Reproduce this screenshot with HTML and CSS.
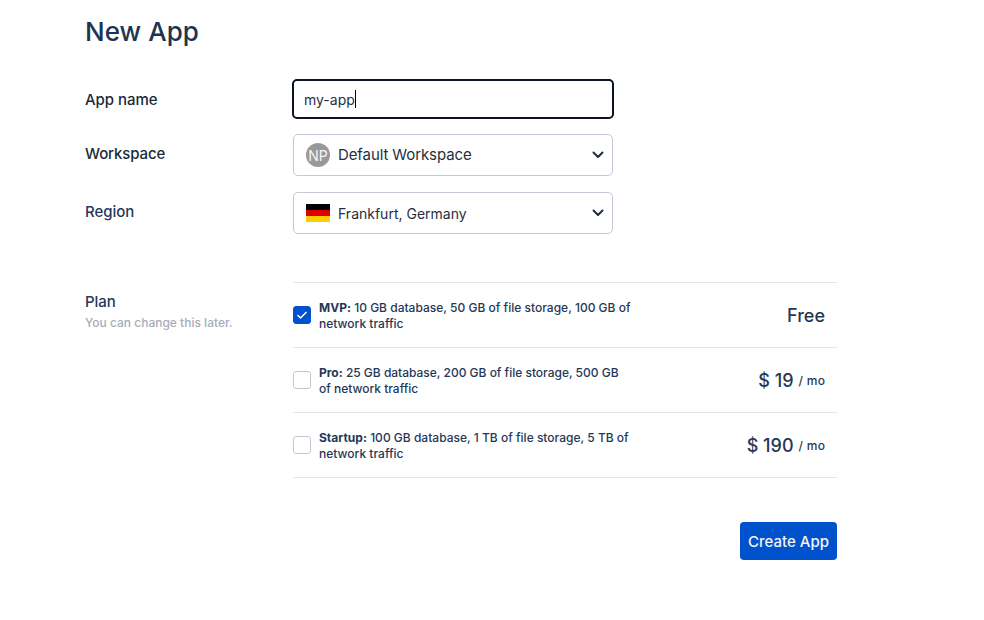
FILE: index.html
```html
<!DOCTYPE html>
<html lang="en">
<head>
<meta charset="utf-8">
<title>New App</title>
<link rel="stylesheet" href="styles.css">
</head>
<body>
<main class="page">
  <h1>New App</h1>
  <div class="row row-name"><label>App name</label><div class="input"><span class="value">my-app</span><i class="caret"></i></div></div>
  <div class="row row-workspace"><label>Workspace</label><div class="select"><span class="avatar">NP</span><span class="value">Default Workspace</span><svg class="chevron" width="12" height="8" viewBox="0 0 12 8"><path d="M1.500 1.500 6 6l4.500-4.500"/></svg></div></div>
  <div class="row row-region"><label>Region</label><div class="select"><span class="flag"></span><span class="value region">Frankfurt, Germany</span><svg class="chevron" width="12" height="8" viewBox="0 0 12 8"><path d="M1.500 1.500 6 6l4.500-4.500"/></svg></div></div>
  <div class="row row-plan">
    <div class="plan-label"><label>Plan</label><small>You can change this later.</small></div>
    <div class="plans">
      <div class="plan"><span class="check checked"><svg width="12" height="10" viewBox="0 0 12 10"><path d="m1.500 5 3 3 6-6"/></svg></span><p><b>MVP:</b> 10 GB database, 50 GB of file storage, 100 GB of<br>network traffic</p><div class="price">Free</div></div>
      <div class="plan"><span class="check"></span><p class="pro"><b>Pro:</b> 25 GB database, 200 GB of file storage, 500 GB<br>of network traffic</p><div class="price">$ 19<span>/ mo</span></div></div>
      <div class="plan"><span class="check"></span><p><b>Startup:</b> 100 GB database, 1 TB of file storage, 5 TB of<br>network traffic</p><div class="price">$ 190<span>/ mo</span></div></div>
    </div>
  </div>
  <div class="actions"><button>Create App</button></div>
</main>
</body>
</html>
```
FILE: styles.css
```css
* { box-sizing: border-box; }
body { margin: 0; background: #fff; color: #253858; font-family: Inter, "Liberation Sans", sans-serif; }
.page { width: 752px; margin-left: 85px; padding-top: 16px; }
h1 { margin: 0; font-size: 26px; line-height: 32px; font-weight: 450; color: #20344f; letter-spacing: 0.05px; }
.row { display: grid; grid-template-columns: 208px 1fr; }
label { display: block; font-size: 15px; line-height: 20px; font-weight: 500; letter-spacing: -0.05px; }
.row-name { margin-top: 31px; }
.row-name label { margin-top: 11px; color: #1b2a38; }
.row-workspace { margin-top: 15px; }
.row-workspace label { margin-top: 10px; color: #1b2a38; letter-spacing: -0.12px; }
.row-region { margin-top: 16px; }
.row-region label { margin-top: 10px; }
.input { display: flex; align-items: center; width: 322px; height: 40px; margin-left: -1px; padding-left: 10px; border: 2px solid #0b1425; border-radius: 5px; }
.input .value { font-size: 14px; padding-top: 2px; }
.caret { width: 1px; height: 18px; background: #000; }
.select { display: flex; align-items: center; gap: 8px; width: 320px; height: 42px; padding: 0 8px 0 12px; border: 1px solid #c1c9d8; border-radius: 5px; }
.value { color: #1f2f3f; font-size: 15px; line-height: 20px; letter-spacing: -0.1px; }
.value.region, .input .value { letter-spacing: 0; }
.region { font-size: 14px; padding-top: 1px; }
.avatar { width: 24px; height: 24px; border-radius: 50%; background: #999; color: #f4f5f7; font-size: 14px; line-height: 26px; text-align: center; }
.flag { width: 24px; height: 18px; background: linear-gradient(#000 0 6px, #d00 6px 12px, #ffce00 12px); }
.chevron { margin-left: auto; }
.chevron path { fill: none; stroke: #1f2f3f; stroke-width: 2; stroke-linecap: round; stroke-linejoin: round; }
.row-plan { margin-top: 48px; }
.plan-label { padding-top: 10px; }
small { display: block; margin-top: 3px; font-size: 12px; line-height: 16px; font-weight: 500; color: #a5adba; }
.plans { border-top: 1px solid #e4e5e7; }
.plan { display: flex; align-items: center; height: 65px; padding-right: 12px; border-bottom: 1px solid #e4e5e7; }
.check { display: flex; align-items: center; justify-content: center; width: 18px; height: 18px; margin-right: 8px; border: 1px solid #c1c9d8; border-radius: 3px; }
.checked { background: #0052cc; border-color: #0052cc; }
.check path { fill: none; stroke: #fff; stroke-width: 1.5; }
p { margin: 0; padding-top: 2px; font-size: 12px; line-height: 16px; font-weight: 500; white-space: nowrap; letter-spacing: 0.01px; }
.pro { letter-spacing: -0.01px; }
.price { display: flex; align-items: center; gap: 5px; margin-left: auto; padding-top: 2px; font-size: 18px; line-height: 24px; font-weight: 500; }
.price span { font-size: 12px; letter-spacing: 0.3px; margin-right: -0.3px; }
.actions { display: flex; justify-content: flex-end; margin-top: 44px; }
button { width: 97px; height: 38px; padding: 0; border: 0; border-radius: 4px; background: #0052cc; color: #f4f5f7; font: 500 15px Inter, sans-serif; }
```
